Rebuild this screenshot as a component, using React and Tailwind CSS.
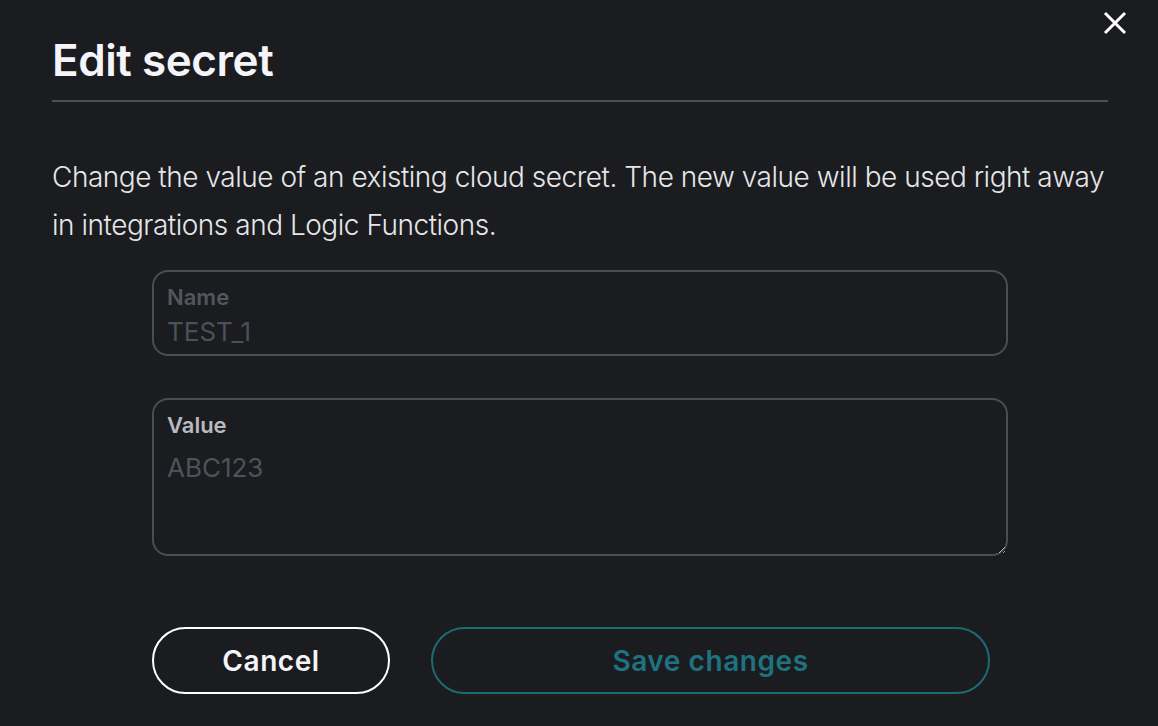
import { useState } from "react";

export default function App() {
  const [value, setValue] = useState("");

  return (
    <div className="relative min-h-screen w-full bg-[#1a1c1f] font-['Inter',sans-serif] text-white">
      {/* close */}
      <button className="absolute right-[29px] top-[9px] p-[2px] text-white">
        <svg width="24" height="24" viewBox="0 0 24 24" fill="none">
          <path d="M2 2L22 22M22 2L2 22" stroke="currentColor" strokeWidth="3" strokeLinecap="butt" />
        </svg>
      </button>

      <div className="pl-[52px] pr-[50px] pt-[38px]">
        <h2 className="text-[44px] font-semibold leading-[44px] tracking-[-0.01em] text-[#f5f4f8]">
          Edit secret
        </h2>
        <div className="mt-[18px] h-[2px] bg-[#4b4e54]" />

        <p className="mt-[51px] text-[28px] font-light leading-[48px] tracking-[-0.017em] text-[#e6e6e8]">
          Change the value of an existing cloud secret. The new value will be used right away in
          integrations and Logic Functions.
        </p>

        <div className="mx-[100px] mt-[21px] flex flex-col gap-[42px]">
          {/* name */}
          <div className="relative">
            <label className="absolute left-[15px] top-[16px] text-[22px] font-semibold leading-[22px] text-[#53565e]">
              Name
            </label>
            <input
              disabled
              value="TEST_1"
              readOnly
              className="box-border h-[86px] w-full rounded-[16px] border-2 border-[#4a4d55] bg-transparent pb-[6px] pl-[13px] pt-[42px] text-[26px] leading-[32px] text-[#4d5058] outline-none"
            />
          </div>

          {/* value */}
          <div className="relative">
            <label className="absolute left-[15px] top-[16px] text-[22px] font-semibold leading-[22px] text-[#b9bac0]">
              Value
            </label>
            <textarea
              value={value}
              onChange={(e) => setValue(e.target.value)}
              placeholder="ABC123"
              className="box-border block h-[158px] w-full rounded-[16px] border-2 border-[#4a4d55] bg-transparent pl-[13px] pt-[52px] text-[26px] leading-[32px] text-[#d0d0d4] outline-none placeholder:text-[#4f525a]"
            />
          </div>
        </div>

        <div className="ml-[100px] mt-[71px] flex gap-[41px]">
          <button className="h-[67px] w-[238px] rounded-full border-2 border-white text-[28px] font-semibold tracking-[0.02em] text-[#f5f4f8]">
            Cancel
          </button>
          <button className="h-[67px] w-[559px] rounded-full border-2 border-[#1e6a73] text-[28px] font-semibold tracking-[0.02em] text-[#1f7380]">
            Save changes
          </button>
        </div>
      </div>
    </div>
  );
}
